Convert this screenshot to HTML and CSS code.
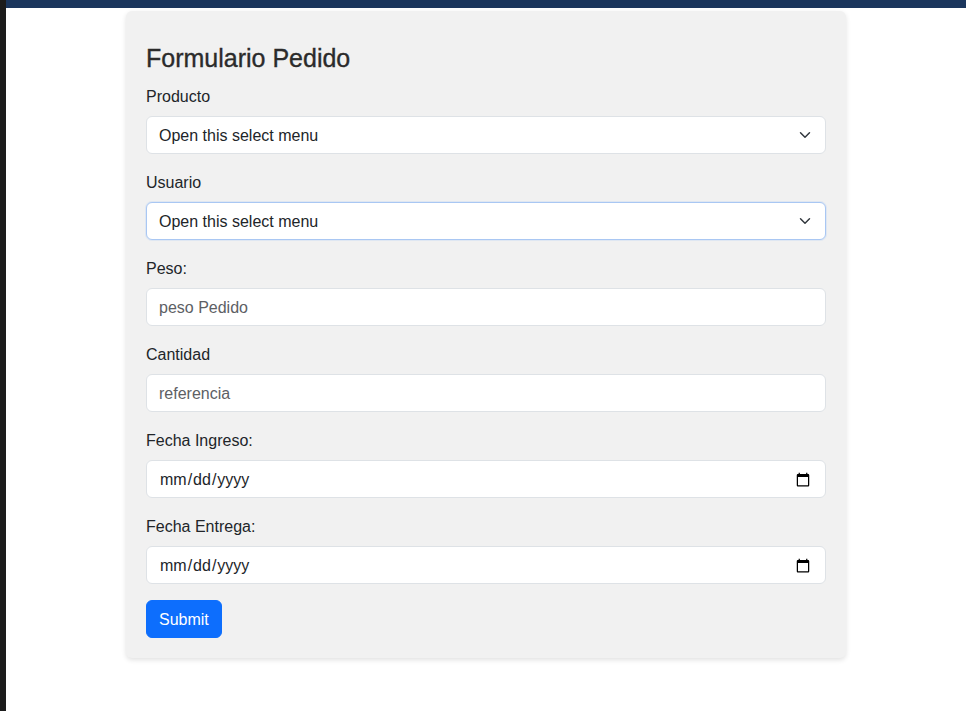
FILE: index.html
```html
<!DOCTYPE html>
<html lang="es">
<head>
<meta charset="utf-8">
<title>Formulario Pedido</title>
<link rel="stylesheet" href="styles.css">
</head>
<body>
<div class="app">
  <div class="rail"></div>
  <div class="main">
    <div class="topbar"></div>
    <div class="content">
      <form class="card">
        <h4 class="title">Formulario Pedido</h4>
        <div class="group">
          <label class="label" for="producto">Producto</label>
          <select id="producto" class="control select"><option>Open this select menu</option></select>
        </div>
        <div class="group">
          <label class="label" for="usuario">Usuario</label>
          <select id="usuario" class="control select focused"><option>Open this select menu</option></select>
        </div>
        <div class="group">
          <label class="label" for="peso">Peso:</label>
          <input id="peso" class="control" type="text" placeholder="peso Pedido">
        </div>
        <div class="group">
          <label class="label" for="cantidad">Cantidad</label>
          <input id="cantidad" class="control" type="text" placeholder="referencia">
        </div>
        <div class="group">
          <label class="label" for="ingreso">Fecha Ingreso:</label>
          <input id="ingreso" class="control" type="date">
        </div>
        <div class="group">
          <label class="label" for="entrega">Fecha Entrega:</label>
          <input id="entrega" class="control" type="date">
        </div>
        <button type="button" class="btn">Submit</button>
      </form>
    </div>
  </div>
</div>
</body>
</html>
```
FILE: styles.css
```css
* { box-sizing: border-box; }
html, body { margin: 0; padding: 0; background: #fff; }
body {
  font-family: "Liberation Sans", Arial, sans-serif;
  font-size: 16px;
  line-height: 24px;
  color: #212529;
}
.app { display: flex; min-height: 711px; }
.rail { width: 6px; background: #1c1c1c; flex: none; }
.main { flex: 1; }
.topbar { height: 8px; background: #1b365d; }
.content { display: flex; justify-content: center; padding-top: 3px; }
.card {
  width: 720px;
  background: #f1f1f1;
  border-radius: 6px;
  padding: 33px 20px 20px;
  box-shadow: 0 2px 5px rgba(0,0,0,0.12);
}
.title {
  margin: 0 0 11px;
  font-size: 25px;
  line-height: 28.8px;
  font-weight: 400;
  -webkit-text-stroke: 0.35px #2b2b2b;
  color: #2b2b2b;
}
.group { margin-bottom: 16px; }
.label { display: block; padding-top: 1px; margin-bottom: 7px; }
.control {
  display: block;
  width: 100%;
  height: 38px;
  padding: 7px 12px 5px;
  font-family: inherit;
  font-size: 16px;
  line-height: 24px;
  color: #212529;
  background: #fff;
  border: 1px solid #dee2e6;
  border-radius: 6px;
  outline: none;
}
.control::placeholder { color: #5d6064; }
.select {
  appearance: none;
  -webkit-appearance: none;
  padding-right: 36px;
  background-image: url("data:image/svg+xml,%3csvg xmlns='http://www.w3.org/2000/svg' viewBox='0 0 16 16'%3e%3cpath fill='none' stroke='%23343a40' stroke-linecap='round' stroke-linejoin='round' stroke-width='2' d='m2 5 6 6 6-6'/%3e%3c/svg%3e");
  background-repeat: no-repeat;
  background-position: right 12px center;
  background-size: 16px 12px;
}
.focused { border-color: #a9c7f3; box-shadow: 0 0 0 1px rgba(13,110,253,0.08); }
.btn {
  display: inline-block;
  height: 38px;
  padding: 7px 12px 5px;
  font-family: inherit;
  font-size: 16px;
  line-height: 24px;
  color: #fff;
  background: #0d6efd;
  border: 1px solid #0d6efd;
  border-radius: 6px;
}
```
